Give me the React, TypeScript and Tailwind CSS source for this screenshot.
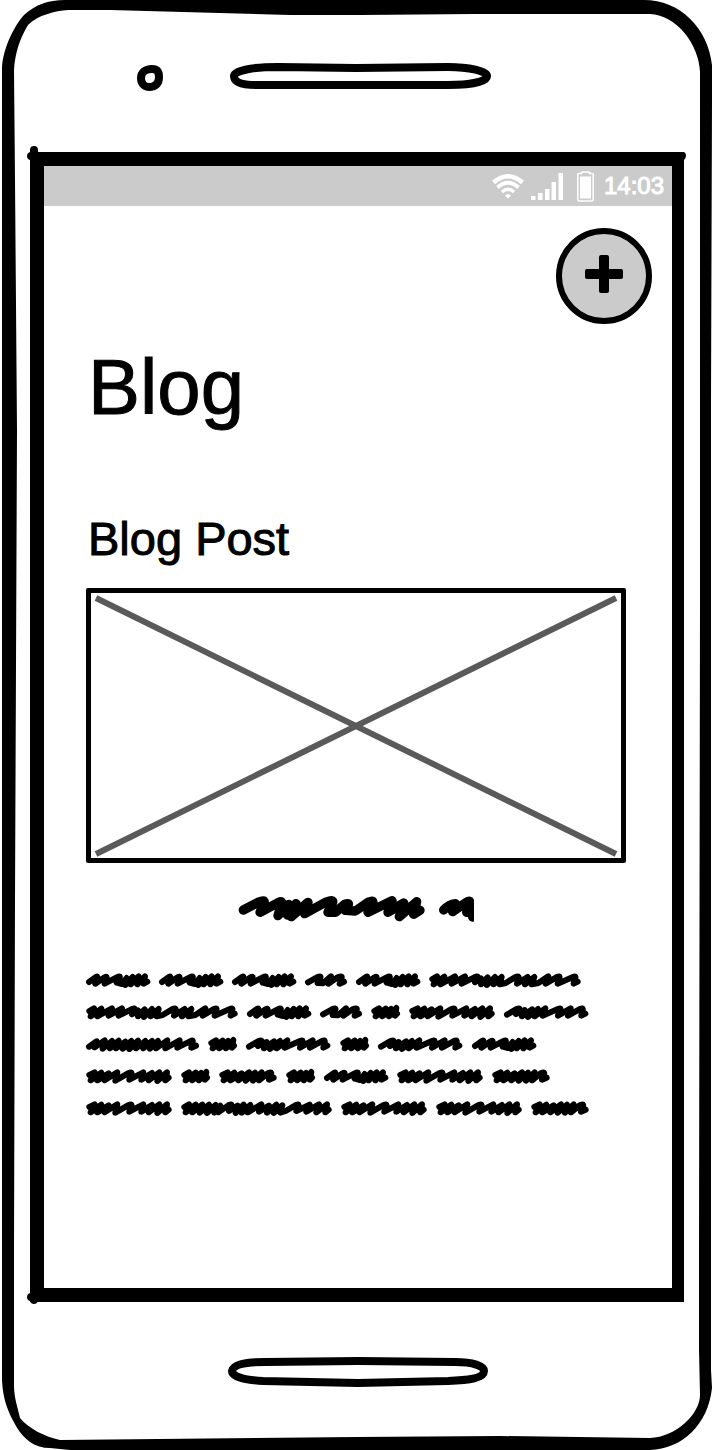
import React from "react";

type Word = { width: number; d: string };

const WORDS: Record<string, Word> = {
  a: { width: 64, d: "M9 27 30 12Q36 8 33 15L28 32 56 13Q64 8 61 15L56 32 92 13Q104 7 101 14L92 29 108 33 122 15 118 36 140 12 134 34 158 10 154 34 177 10 173 32 184 26" },
  b: { width: 42, d: "M9 28 36 13Q49 7 46 14L38 30 54 31 78 10 70 32 98 13Q112 7 110 14L104 32 117 26" },
  c: { width: 152, d: "M10 18 24 10 14 34 46 11 34 34 78 10 68 32 108 10 98 32 136 13Q148 8 146 14L138 28 156 16 156 34 176 13 174 36 198 12 194 34 218 12 212 34 230 30 258 13Q270 8 269 14L264 32 296 12 288 34 316 12 308 34 328 30 358 10 350 32 382 13Q394 8 391 14L386 32 430 13Q441 8 439 14L434 32 446 26" },
  d: { width: 29, d: "M10 18 24 10 14 34 44 11 34 34 60 12 54 34 76 9 72 32 78 26" },
  e: { width: 86, d: "M10 18 26 10 14 34 46 11 34 34 68 13 56 34 94 10 88 35 126 13Q139 8 136 14L130 32 172 10 166 32 198 12 188 34 220 10 214 36 243 10 238 34 248 26" },
  f: { width: 85, d: "M9 29 36 13Q49 8 46 14L36 27 62 15 54 34 84 13 72 36 102 12 92 34 124 10 116 32 160 13Q172 8 169 14L162 32 200 10 192 32 226 13Q238 8 236 14L232 32 244 26" },
  g: { width: 113, d: "M9 29 32 13 26 31 56 10 50 35 78 12 72 34 98 11 90 34 118 14 110 35 136 12 130 36 156 11 150 34 178 12 172 34 198 12 192 35 216 12 210 34 244 10 238 34 281 10 274 32 312 13Q322 8 320 14L316 32 330 26" },
  h: { width: 58, d: "M10 18 26 10 14 34 46 11 34 34 68 13 58 34 90 10 80 35 108 11 102 35 128 10 120 34 146 13Q159 8 156 14L150 32 164 26" },
  i: { width: 151, d: "M10 18 24 10 14 34 44 11 34 34 64 11 56 35 84 11 78 36 104 12 100 35 118 14 112 34 142 13Q154 8 151 14L144 30 170 14 164 36 188 11 182 35 208 12 200 34 241 10 234 32 264 14 258 35 286 11 278 36 304 13 298 35 314 30 343 13Q355 8 352 14L346 30 386 11 376 32 414 10 406 34 438 10 433 34 443 26" },
};

const LINES = ["aaabac", "cabdef", "gdfdfa", "edhdaeh", "eieeh"];

function ScribbleWord({ kind }: { kind: string }) {
  const word = WORDS[kind];
  return (
    <svg
      aria-hidden="true"
      className="h-[15px] shrink-0 overflow-visible"
      width={word.width}
      viewBox={`0 0 ${word.width * 3} 45`}
      fill="none"
      stroke="#000"
      strokeWidth="18"
      strokeLinecap="round"
      strokeLinejoin="round"
    >
      <path d={word.d} />
    </svg>
  );
}

function PhoneOutline() {
  return (
    <svg
      aria-hidden="true"
      className="pointer-events-none absolute inset-0 h-full w-full"
      viewBox="0 0 712 1450"
      preserveAspectRatio="none"
    >
      <path
        fillRule="evenodd"
        d="M2 68C3 47 15 25 24 15C35 5 48 0 65 0H644C680 0 708 28 712 65V100L711 400V1370L712 1388C708 1425 682 1449 650 1450H70L50 1448C35 1448 24 1440 16 1426C8 1412 3 1400 2 1380ZM14 70L15 180L17 430L15 900L14 1250V1385C14 1397 17 1405 20 1418C28 1428 45 1437 60 1440L356 1437L500 1436L650 1438C676 1437 700 1414 700 1395L699 1350V1250L700 600V72C699 45 677 15 650 14L475 14L360 15L290 15L110 10H68C55 11 38 15 28 25C20 38 15 53 14 70Z"
      />
    </svg>
  );
}

function StatusBar() {
  return (
    <div className="flex h-10 items-center justify-end bg-[#cbcbcb] pr-2 text-white">
      <svg aria-label="Wi-Fi" role="img" width="34" height="26" viewBox="0 0 34 26" fill="none" stroke="currentColor">
        <path d="M2.500 9.500Q17-3 31.500 9.500" strokeWidth="4.500" />
        <path d="M6.500 14.500Q17 5 27.500 14.500" strokeWidth="3.800" />
        <path d="M11 19Q17 13.500 23 19" strokeWidth="3.500" />
        <path d="M14 22.500Q17 20 20 22.500L17 25.500Z" fill="currentColor" stroke="none" />
      </svg>
      <svg aria-label="Signal" role="img" className="ml-[6px]" width="32" height="28" viewBox="0 0 32 28" fill="currentColor">
        <path d="M0 24h4.500v4H0zM7 21h4.500v7H7zM14 17h4.500v11H14zM20.500 10H25v18h-4.500zM27.500 1H32v27h-4.500z" />
      </svg>
      <svg aria-label="Battery" role="img" className="ml-[14px]" width="17" height="31" viewBox="0 0 17 31">
        <path d="M4.500 2.500V1.800Q4.500 1 5.500 1H11.500Q12.500 1 12.500 1.800V2.500H15Q16.200 2.500 16.200 4V28.500Q16.200 30 15 30H2Q.8 30 .8 28.500V4Q.8 2.500 2 2.500Z" fill="none" stroke="currentColor" strokeWidth="1.500" />
        <path d="M3 5.500H14V27.500H3Z" fill="currentColor" />
      </svg>
      <time className="ml-[10px] text-2xl [-webkit-text-stroke:1px_white]">14:03</time>
    </div>
  );
}

export default function App() {
  return (
    <main className="relative flex min-h-screen flex-col bg-white font-['Liberation_Sans',Arial,sans-serif] text-black">
      <PhoneOutline />

      <header className="flex h-[152px] items-start pt-[62px]">
        <svg aria-hidden="true" className="ml-[135px]" width="30" height="30" viewBox="0 0 30 30" fill="none" stroke="#000" strokeWidth="8">
          <path d="M17 7C10 7 6 11 6 16C6 22 10 25 14 25C21 25 24 21 24 15C24 10 22 7 17 7Z" />
        </svg>
        <svg aria-hidden="true" className="ml-[61px]" width="270" height="30" viewBox="0 0 270 30" fill="none" stroke="#000" strokeWidth="8">
          <path d="M52 5L130 6L222 5C243 5 261 9 261 14C261 20 243 23 222 23H30C15 23 8 20 8 14C8 8 30 5 52 5Z" />
        </svg>
      </header>

      <section
        aria-label="Phone screen"
        className="relative ml-[30px] mr-[28px] flex grow flex-col border-y-[14px] border-l-[14px] border-r-[12px] border-black bg-white"
      >
        <svg aria-hidden="true" className="absolute -left-[18px] -top-[20px]" width="14" height="20" viewBox="0 0 14 20">
          <path d="M4 20V14Q1 13 1 10Q1 7 4 6V4Q4 0 8 0Q12 0 12 4V20Z" />
        </svg>
        <svg aria-hidden="true" className="absolute -right-[14px] -top-[14px]" width="10" height="9" viewBox="0 0 10 9">
          <path d="M0 0H7Q10 0 10 4Q10 6 8 8L0 9Z" />
        </svg>
        <svg aria-hidden="true" className="absolute -bottom-[17px] -left-[17px]" width="14" height="14" viewBox="0 0 14 14">
          <path d="M3 0V2Q0 3 0 6Q0 9 3 10Q4 13 7 13Q10 13 11 10L14 10V0Z" />
        </svg>

        <StatusBar />

        <div className="flex justify-end pr-5 pt-[22px]">
          <button
            type="button"
            aria-label="Add post"
            className="flex size-24 items-center justify-center rounded-full border-[6px] border-black bg-[#cbcbcb] pb-1"
          >
            <svg aria-hidden="true" width="38" height="38" viewBox="0 0 38 38">
              <rect x="14" width="10" height="38" rx="2" />
              <rect y="14" width="38" height="10" rx="2" />
            </svg>
          </button>
        </div>

        <div className="pl-[42px] pr-[46px]">
          <h1 className="mt-[17px] pl-0.5 text-[78px] leading-[92px] [-webkit-text-stroke:1px_black]">Blog</h1>
          <article className="mt-[79px]">
            <h2 className="pl-0.5 text-[47px] leading-[54px] [-webkit-text-stroke:1px_black]">Blog Post</h2>
            <div role="img" aria-label="Image placeholder" className="mt-[22px] h-[275px] rounded-[2px] border-[5px] border-black p-1">
              <svg aria-hidden="true" className="h-full w-full overflow-visible" viewBox="0 0 522 257" preserveAspectRatio="none" stroke="#5a5a5a" strokeWidth="6">
                <path d="M1 1L521 257M521 1L1 257" />
              </svg>
            </div>
            <svg aria-label="Scribbled title" role="img" className="mx-auto mt-8 block" width="236" height="28" viewBox="38 32 708 84" fill="none" stroke="#000" strokeWidth="28" strokeLinecap="round" strokeLinejoin="round">
              <path d="M54 77L98 54Q120 44 116 56L104 84L160 54Q172 48 168 60L158 94L190 60L186 92L212 58L198 97L248 54L238 88L302 53Q325 44 322 54L308 84L330 84L358 60Q372 54 368 64L360 78L390 80L428 54Q446 46 442 56L428 84L500 49L488 84L535 56L522 97L574 52L565 90L584 78" />
              <path d="M655 77Q672 60 690 58L682 82L720 56Q736 44 733 58L724 84L752 60L742 98" />
            </svg>
            <div role="img" aria-label="Scribbled paragraph" className="mt-[50px] flex flex-col gap-[17px]">
              {LINES.map((line) => (
                <div key={line} className="flex gap-[9px]">
                  {line.split("").map((kind, index) => (
                    <ScribbleWord key={index} kind={kind} />
                  ))}
                </div>
              ))}
            </div>
          </article>
        </div>
      </section>

      <footer className="flex h-[148px] items-start justify-center pt-[52px]">
        <svg aria-hidden="true" className="mr-[-4px]" width="270" height="36" viewBox="0 0 270 36" fill="none" stroke="#000" strokeWidth="8">
          <path d="M42 8L135 7L232 8C250 8 261 12 261 17C261 24 247 26 225 27L135 29L40 27C20 26 9 22 9 17C10 11 20 8 42 8Z" />
        </svg>
      </footer>
    </main>
  );
}
